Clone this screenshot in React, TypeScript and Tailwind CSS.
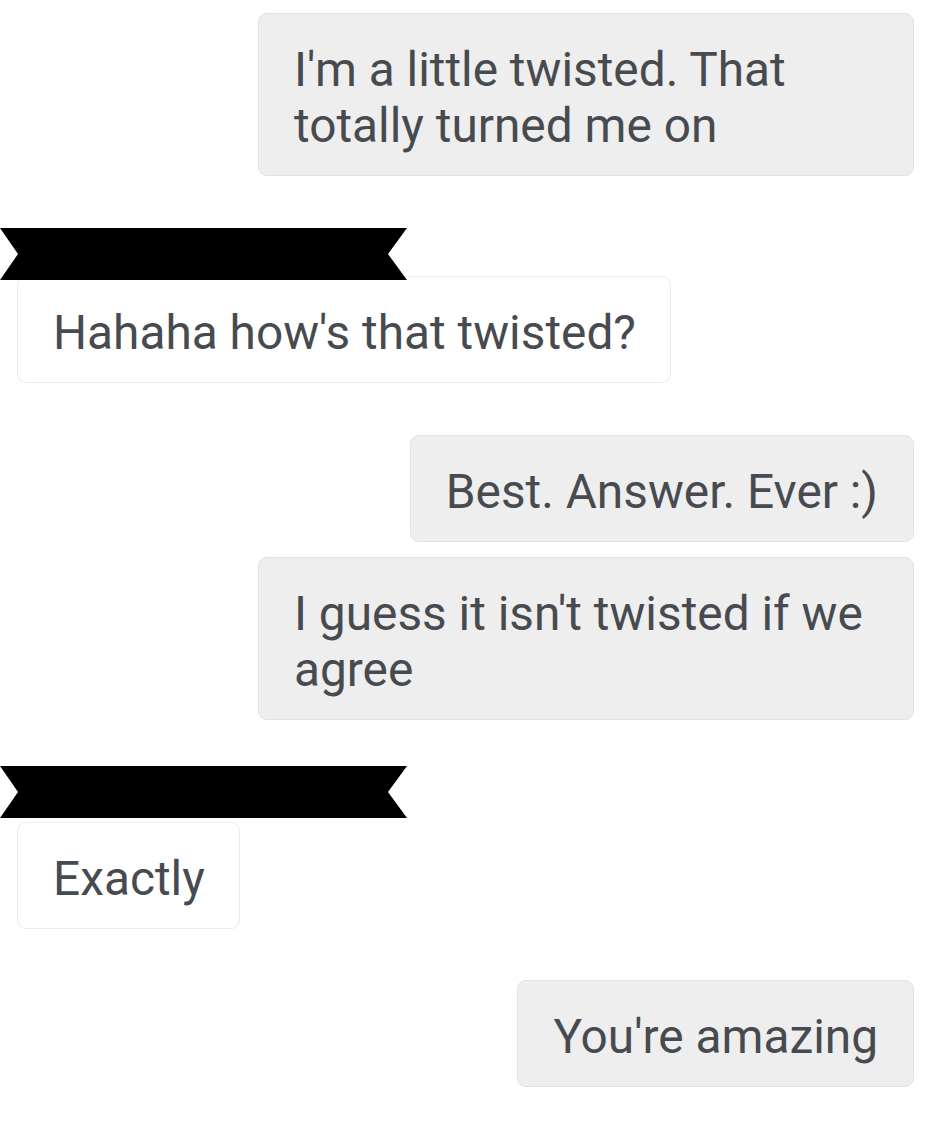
import React from "react";

function Ribbon({ className }: { className?: string }) {
  return (
    <svg width="407" height="52" viewBox="0 0 407 52" className={"relative z-10 shrink-0 " + (className ?? "")}>
      <polygon points="0,0 407,0 388,26 407,52 0,52 18,26" fill="#000" />
    </svg>
  );
}

function Mine({ children, className }: { children: React.ReactNode; className?: string }) {
  return (
    <div className={"self-end mr-[26px] max-w-[656px] rounded-[9px] border border-[#e2e2e2] bg-[#eeeeee] pl-[35px] pr-[35px] pt-[28px] pb-[21px] text-[47.8px] leading-[56px] text-[#474b4f] " + (className ?? "")}>
      {children}
    </div>
  );
}

function Theirs({ children, className }: { children: React.ReactNode; className?: string }) {
  return (
    <div className={"self-start ml-[17px] max-w-[656px] rounded-[9px] border border-[#ebebeb] bg-white pl-[35px] pr-[34px] pt-[28px] pb-[21px] text-[47.8px] leading-[56px] text-[#474b4f] " + (className ?? "")}>
      {children}
    </div>
  );
}

export default function App() {
  return (
    <div className="flex h-[1143px] w-[940px] flex-col overflow-hidden bg-white font-['Roboto',sans-serif]">
      <Mine className="mt-[13px] w-[656px]">I'm a little twisted. That totally turned me on</Mine>
      <Ribbon className="mt-[52px]" />
      <Theirs className="mt-[-4px]">Hahaha how's that twisted?</Theirs>
      <Mine className="mt-[52px]">Best. Answer. Ever :)</Mine>
      <Mine className="mt-[15px] w-[656px]">I guess it isn't twisted if we agree</Mine>
      <Ribbon className="mt-[46px]" />
      <Theirs className="mt-[4px]">Exactly</Theirs>
      <Mine className="mt-[51px]">You're amazing</Mine>
    </div>
  );
}
